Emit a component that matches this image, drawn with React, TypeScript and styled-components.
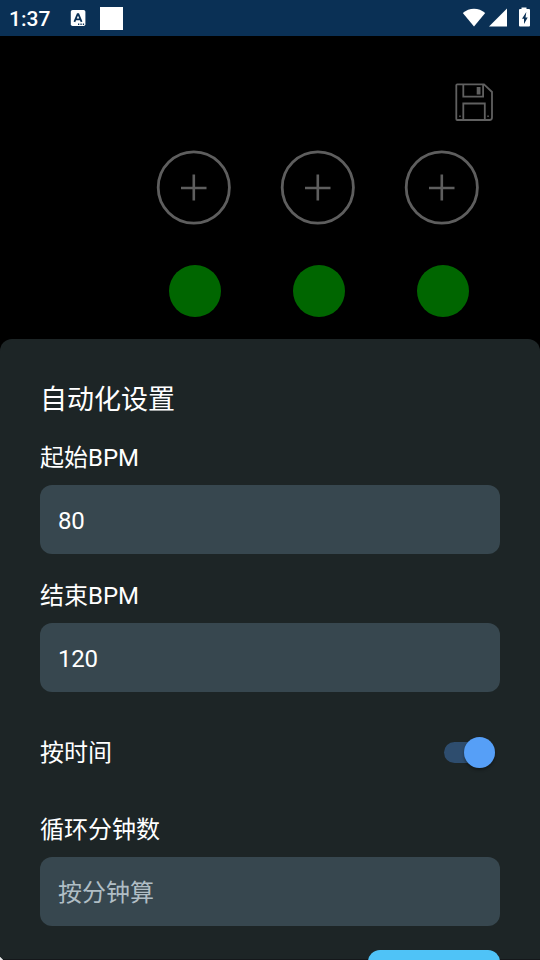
import React from "react";
import styled, { createGlobalStyle } from "styled-components";

const Global = createGlobalStyle`
  * { box-sizing: border-box; }
  html, body { margin: 0; padding: 0; background: #000; overflow: hidden; }
  body { font-family: Roboto, "Noto Sans CJK SC", sans-serif; color: #fff; }
`;

const Screen = styled.div`
  width: 540px;
  height: 960px;
  display: flex;
  flex-direction: column;
  overflow: hidden;
  background: #000;
`;

const StatusBar = styled.header`
  height: 36px;
  flex: none;
  display: flex;
  align-items: center;
  justify-content: space-between;
  padding: 0 8px 0 9px;
  background: #0a3055;
`;

const StatusGroup = styled.div`
  display: flex;
  align-items: center;
  height: 100%;
`;

const Clock = styled.span`
  width: 61px;
  font-size: 21px;
  line-height: 36px;
  font-weight: 500;
  padding-top: 1px;
`;

const Notice = styled.div`
  width: 23px;
  height: 23px;
  margin: 1px 0 0 14px;
  background: #fff;
`;

const Stage = styled.main`
  height: 303px;
  flex: none;
  display: flex;
  flex-direction: column;
  align-items: flex-end;
`;

const SaveButton = styled.button`
  display: block;
  margin: 46px 46px 0 0;
  padding: 0;
  border: 0;
  background: none;
  width: 40px;
  height: 40px;
`;

const Beats = styled.div`
  display: grid;
  grid-template-columns: repeat(3, 76px);
  column-gap: 48px;
  margin: 27px 60px 0 0;
`;

const Beat = styled.div`
  display: flex;
  flex-direction: column;
  align-items: center;
  gap: 40px;
`;

const Dot = styled.div`
  width: 52px;
  height: 52px;
  margin-left: 2px;
  border-radius: 50%;
  background: #006600;
`;

const Sheet = styled.section`
  flex: 1;
  min-height: 0;
  padding: 40px 40px 0;
  border-radius: 12px 12px 0 0;
  background:
    linear-gradient(45deg, #e8e8e8 0 2px, transparent 2.5px),
    linear-gradient(#15181b, #15181b) bottom / 100% 1px no-repeat,
    #1d2526;
  display: flex;
  flex-direction: column;
  overflow: hidden;
`;

const Title = styled.h1`
  flex: none;
  margin: 0;
  height: 41px;
  font-size: 27px;
  line-height: 42px;
  font-weight: 400;
`;

const Label = styled.label<{ $top: number }>`
  flex: none;
  display: block;
  margin-top: ${(p) => p.$top}px;
  height: 36px;
  font-size: 24px;
  line-height: 36px;
`;

const Field = styled.input`
  flex: none;
  display: block;
  width: 100%;
  height: 69px;
  margin-top: 9px;
  padding: 3px 18px 0;
  border: 0;
  border-radius: 12px;
  outline: 0;
  background: #37474f;
  color: #fff;
  font: 400 24px Roboto, "Noto Sans CJK SC", sans-serif;
  &:not(:placeholder-shown) { letter-spacing: -0.2px; }
  &::placeholder { color: #b0bec5; opacity: 1; }
`;

const SwitchRow = styled.div`
  flex: none;
  display: flex;
  align-items: center;
  justify-content: space-between;
  height: 40px;
  margin-top: 41px;
  font-size: 24px;
  line-height: 40px;
`;

const Track = styled.div`
  display: flex;
  align-items: center;
  justify-content: flex-end;
  width: 51px;
  height: 21px;
  margin: -1px 5px 0 0;
  border-radius: 11px;
  background: #2e4d6e;
`;

const Knob = styled.div`
  width: 31px;
  height: 31px;
  flex: none;
  border-radius: 50%;
  background: #569ff7;
  box-shadow: 0 2px 3px rgba(0, 0, 0, 0.35);
`;

const Confirm = styled.button`
  flex: none;
  align-self: flex-end;
  width: 132px;
  height: 60px;
  margin-top: 24px;
  border: 0;
  border-radius: 12px;
  background: #4fc3f7;
`;

const KeyboardIcon = () => (
  <svg width="16" height="18" viewBox="0 0 16 18">
    <rect x="0.8" y="1" width="14.6" height="16" rx="1.8" fill="#fff" />
    <path d="M4.4 12.8 7.6 5.2h.8l3.2 7.6M5.6 10.3h4.8" fill="none" stroke="#0a3055" strokeWidth="1.8" />
    <path d="M8 15.3h1.3M10.4 15.3h1.3M12.8 15.3h1.3" stroke="#0a3055" strokeWidth="1.4" />
  </svg>
);

const SystemIcons = () => (
  <svg width="70" height="22" viewBox="0 0 70 22">
    <path d="M0.8 6C7.2 .3 16.8 .3 23.2 6L12 19.6Z" fill="#fff" />
    <path d="M45 1.5v18H27Z" fill="#fff" />
    <path d="M58 2h1.5V.5h5V2H67q1 0 1 1V18.5q0 1-1 1h-9q-1 0-1-1V3q0-1 1-1Z" fill="#fff" />
    <path d="m64.3 5-4.3 6.8h2v5.2l3.7-6.6h-2.2Z" fill="#0a3055" />
  </svg>
);

const SaveIcon = () => (
  <svg width="40" height="40" viewBox="0 0 40 40" fill="none" stroke="#606060" strokeWidth="1.8">
    <path d="M3.3 2.3h26.7l8 7.7v25.5q0 2.5-2.5 2.5H3.3q-1 0-1-1V3.3q0-1 1-1Z" />
    <path d="M9.3 2.3v12.4h19.8V2.3M9.3 38V21.5h21.5V38" />
    <path d="M23.5 5.7h2.2v6h-2.2Z" strokeWidth="1.6" fill="#606060" />
    <path d="M5.2 34.2h1.5M33.3 34.2h1.5" strokeWidth="1.5" />
  </svg>
);

const AddIcon = () => (
  <svg width="76" height="76" viewBox="0 0 76 76" fill="none" stroke="#5e5e5e" strokeWidth="2.8">
    <circle cx="37.8" cy="38.5" r="35.6" />
    <path d="M25 39h25.500M37.800 25.500v26" strokeWidth="2.6" />
  </svg>
);

export default function App() {
  return (
    <>
      <Global />
      <Screen>
        <StatusBar>
          <StatusGroup>
            <Clock>1:37</Clock>
            <KeyboardIcon />
            <Notice />
          </StatusGroup>
          <SystemIcons />
        </StatusBar>
        <Stage>
          <SaveButton aria-label="保存">
            <SaveIcon />
          </SaveButton>
          <Beats>
            {[0, 1, 2].map((n) => (
              <Beat key={n}>
                <AddIcon />
                <Dot />
              </Beat>
            ))}
          </Beats>
        </Stage>
        <Sheet>
          <Title>自动化设置</Title>
          <Label $top={20}>起始BPM</Label>
          <Field defaultValue="80" placeholder=" " />
          <Label $top={24}>结束BPM</Label>
          <Field defaultValue="120" placeholder=" " />
          <SwitchRow>
            <span>按时间</span>
            <Track role="switch" aria-checked="true">
              <Knob />
            </Track>
          </SwitchRow>
          <Label $top={39}>循环分钟数</Label>
          <Field placeholder="按分钟算" />
          <Confirm aria-label="确定" />
        </Sheet>
      </Screen>
    </>
  );
}
